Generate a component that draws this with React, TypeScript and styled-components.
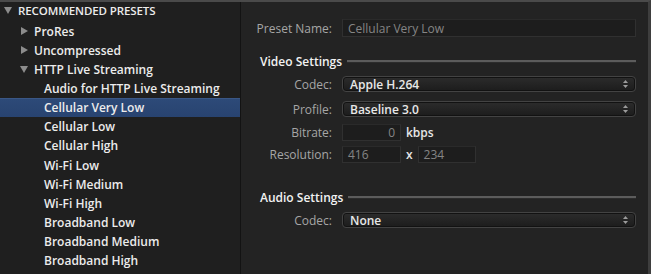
import styled, { createGlobalStyle } from 'styled-components';

const GlobalStyle = createGlobalStyle`
  html, body {
    margin: 0;
    padding: 0;
    background: #232323;
  }
  * {
    box-sizing: border-box;
  }
`;

const Window = styled.div`
  display: flex;
  width: 651px;
  height: 274px;
  overflow: hidden;
  border-top: 2px solid #4a4a4a;
  border-right: 3px solid #3e3e3e;
  font-family: 'Open Sans', 'Liberation Sans', sans-serif;
  font-size: 12px;
  color: #ececec;
`;

const Sidebar = styled.div`
  width: 241px;
  flex-shrink: 0;
  background: #1f1f1f;
  border-right: 1px solid #131313;
`;

const Header = styled.div`
  display: flex;
  align-items: center;
  height: 19px;
  padding: 0 0 3px 4px;
  font-size: 11.5px;
  font-weight: 600;
  letter-spacing: -0.1px;
  white-space: nowrap;
`;

const Row = styled.div<{ $level: number; $selected?: boolean }>`
  display: flex;
  align-items: center;
  height: 19.15px;
  padding-left: ${({ $level }) => 4 + $level * 16}px;
  font-weight: 600;
  white-space: nowrap;
  background: ${({ $selected }) => ($selected ? 'linear-gradient(#2d4a78, #284370)' : 'transparent')};
  border-top: 1px solid ${({ $selected }) => ($selected ? '#3a5786' : 'transparent')};
`;

const Disclosure = styled.span<{ $open?: boolean }>`
  display: inline-block;
  width: 0;
  height: 0;
  margin-right: 6px;
  ${({ $open }) =>
    $open
      ? `border-left: 4px solid transparent; border-right: 4px solid transparent; border-top: 7px solid #8c8c8c;`
      : `border-top: 4px solid transparent; border-bottom: 4px solid transparent; border-left: 7px solid #8c8c8c; margin-left: 1px;`}
`;

const Leaf = styled.span`
  display: inline-block;
  width: 8px;
`;

const Content = styled.div`
  flex: 1;
  padding: 17px 11px 0 10px;
  background: #232323;
`;

const FieldRow = styled.div<{ $mt: number; $h: number }>`
  display: flex;
  align-items: center;
  height: ${({ $h }) => $h}px;
  margin-top: ${({ $mt }) => $mt}px;
`;

const Label = styled.div`
  width: 82px;
  text-align: right;
  color: #a6a6a6;
  padding-right: 1px;
  margin-right: 9px;
  flex-shrink: 0;
  white-space: nowrap;
`;

const Input = styled.div<{ $w?: number; $align?: string }>`
  width: ${({ $w }) => ($w ? `${$w}px` : 'auto')};
  flex: ${({ $w }) => ($w ? 'none' : 1)};
  align-self: stretch;
  display: flex;
  align-items: center;
  justify-content: ${({ $align }) => ($align === 'right' ? 'flex-end' : 'flex-start')};
  background: #1d1d1d;
  border: 1px solid #303030;
  border-top-color: #2a2a2a;
  color: #858585;
  padding: 0 5px;
  margin-right: 1px;
`;

const Select = styled.div`
  flex: 1;
  align-self: stretch;
  display: flex;
  align-items: center;
  justify-content: space-between;
  border-radius: 4px;
  border: 1px solid #434343;
  background: linear-gradient(#2c2c2c, #1c1c1c);
  box-shadow: inset 0 0 0 1px #121212;
  padding: 0 7px;
  margin-right: 1px;
  font-weight: 600;
  color: #e8e8e8;
`;

const Arrows = styled.svg`
  width: 5px;
  height: 8px;
`;

const Unit = styled.span`
  color: #e6e6e6;
  font-weight: 600;
  margin: 0 5px 0 4px;
`;

const Section = styled.div<{ $mt: number }>`
  display: flex;
  align-items: center;
  height: 18px;
  margin-top: ${({ $mt }) => $mt}px;
  padding-left: 9px;
  font-weight: 600;
  color: #f2f2f2;
  white-space: nowrap;
`;

const Rule = styled.div`
  flex: 1;
  height: 2px;
  margin-left: 5px;
  margin-right: 1px;
  background: #5c5c5c;
  border-bottom: 1px solid #2c2c2c;
  box-sizing: content-box;
`;

const tree = [
  { label: 'ProRes', level: 1, kind: 'closed' },
  { label: 'Uncompressed', level: 1, kind: 'closed' },
  { label: 'HTTP Live Streaming', level: 1, kind: 'open' },
  { label: 'Audio for HTTP Live Streaming', level: 2, kind: 'leaf' },
  { label: 'Cellular Very Low', level: 2, kind: 'leaf', selected: true },
  { label: 'Cellular Low', level: 2, kind: 'leaf' },
  { label: 'Cellular High', level: 2, kind: 'leaf' },
  { label: 'Wi-Fi Low', level: 2, kind: 'leaf' },
  { label: 'Wi-Fi Medium', level: 2, kind: 'leaf' },
  { label: 'Wi-Fi High', level: 2, kind: 'leaf' },
  { label: 'Broadband Low', level: 2, kind: 'leaf' },
  { label: 'Broadband Medium', level: 2, kind: 'leaf' },
  { label: 'Broadband High', level: 2, kind: 'leaf' },
];

function PopUp({ value }: { value: string }) {
  return (
    <Select>
      <span>{value}</span>
      <Arrows viewBox="0 0 5 8">
        <path d="M2.5 0 L5 3 H0 Z" fill="#9c9c9c" />
        <path d="M2.5 8 L5 5 H0 Z" fill="#9c9c9c" />
      </Arrows>
    </Select>
  );
}

export default function App() {
  return (
    <>
      <GlobalStyle />
      <Window>
        <Sidebar>
          <Header>
            <Disclosure $open />
            RECOMMENDED PRESETS
          </Header>
          {tree.map((item) => (
            <Row key={item.label} $level={item.level} $selected={item.selected}>
              {item.kind === 'leaf' ? <Leaf /> : <Disclosure $open={item.kind === 'open'} />}
              {item.label}
            </Row>
          ))}
        </Sidebar>
        <Content>
          <FieldRow $mt={0} $h={18}>
            <Label>Preset Name:</Label>
            <Input>Cellular Very Low</Input>
          </FieldRow>
          <Section $mt={15}>
            Video Settings
            <Rule />
          </Section>
          <FieldRow $mt={6} $h={16}>
            <Label>Codec:</Label>
            <PopUp value="Apple H.264" />
          </FieldRow>
          <FieldRow $mt={9} $h={16}>
            <Label>Profile:</Label>
            <PopUp value="Baseline 3.0" />
          </FieldRow>
          <FieldRow $mt={7} $h={17}>
            <Label>Bitrate:</Label>
            <Input $w={59} $align="right">0</Input>
            <Unit>kbps</Unit>
          </FieldRow>
          <FieldRow $mt={5} $h={17}>
            <Label>Resolution:</Label>
            <Input $w={59}>416</Input>
            <Unit>x</Unit>
            <Input $w={58}>234</Input>
          </FieldRow>
          <Section $mt={25}>
            Audio Settings
            <Rule />
          </Section>
          <FieldRow $mt={6} $h={16}>
            <Label>Codec:</Label>
            <PopUp value="None" />
          </FieldRow>
        </Content>
      </Window>
    </>
  );
}
